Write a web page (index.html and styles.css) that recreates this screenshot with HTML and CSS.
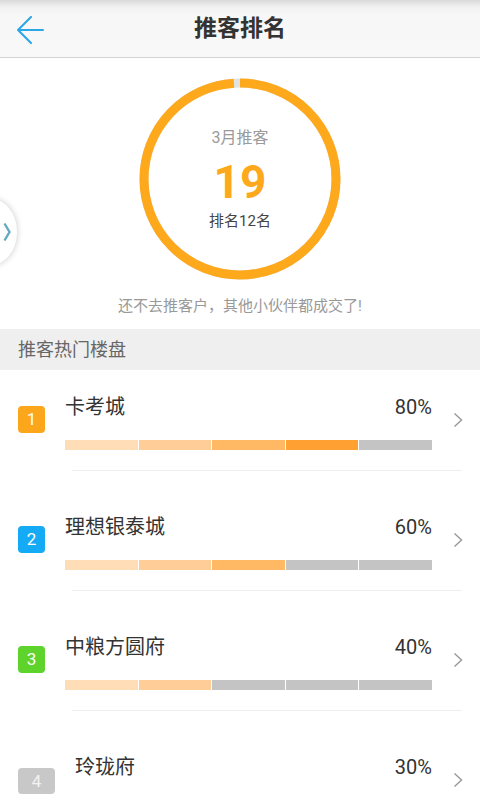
FILE: index.html
```html
<!DOCTYPE html>
<html lang="zh-CN">
<head>
<meta charset="utf-8">
<title>推客排名</title>
<link rel="stylesheet" href="styles.css">
</head>
<body>
<header class="topbar">
  <span class="back">
    <svg width="28" height="28" viewBox="0 0 28 28"><path d="M14 1 L1 14 L14 27 M1 14 H26" fill="none" stroke="#2ba6e6" stroke-width="2" stroke-linecap="round" stroke-linejoin="round"/></svg>
  </span>
  <h1 class="title">推客排名</h1>
  <span></span>
</header>

<section class="hero">
  <div class="side-tab">
    <svg width="8" height="20" viewBox="0 0 8 20"><path d="M1.5 1.5 L6.5 10 L1.5 18.5" fill="none" stroke="#64a9c6" stroke-width="2.4"/></svg>
  </div>
  <div class="ring">
    <svg class="ring-svg" width="202" height="202" viewBox="0 0 202 202">
      <circle cx="101" cy="101" r="96" fill="none" stroke="#e2e2e2" stroke-width="9"/>
      <circle cx="101" cy="101" r="96" fill="none" stroke="#fea81b" stroke-width="9" stroke-dasharray="596 700" transform="rotate(-90 101 101)"/>
    </svg>
    <div class="ring-text">
      <div class="month">3月推客</div>
      <div class="count">19</div>
      <div class="rank">排名12名</div>
    </div>
  </div>
  <p class="hint">还不去推客户，其他小伙伴都成交了!</p>
</section>

<div class="section-title">推客热门楼盘</div>

<ul class="list">
  <li class="item">
    <div class="row">
      <span class="badge b1">1</span>
      <div class="main">
        <div class="line"><span class="name">卡考城</span><span class="rate">80%</span></div>
        <div class="bar"><i class="s1"></i><i class="s2"></i><i class="s3"></i><i class="s4"></i><i class="s0"></i></div>
      </div>
      <svg class="chev" width="10" height="16" viewBox="0 0 10 16"><path d="M1.5 1.5 L8.5 8 L1.5 14.5" fill="none" stroke="#9c9c9c" stroke-width="1.5"/></svg>
    </div>
  </li>
  <li class="item">
    <div class="row">
      <span class="badge b2">2</span>
      <div class="main">
        <div class="line"><span class="name">理想银泰城</span><span class="rate">60%</span></div>
        <div class="bar"><i class="s1"></i><i class="s2"></i><i class="s3"></i><i class="s0"></i><i class="s0"></i></div>
      </div>
      <svg class="chev" width="10" height="16" viewBox="0 0 10 16"><path d="M1.5 1.5 L8.5 8 L1.5 14.5" fill="none" stroke="#9c9c9c" stroke-width="1.5"/></svg>
    </div>
  </li>
  <li class="item">
    <div class="row">
      <span class="badge b3">3</span>
      <div class="main">
        <div class="line"><span class="name">中粮方圆府</span><span class="rate">40%</span></div>
        <div class="bar"><i class="s1"></i><i class="s2"></i><i class="s0"></i><i class="s0"></i><i class="s0"></i></div>
      </div>
      <svg class="chev" width="10" height="16" viewBox="0 0 10 16"><path d="M1.5 1.5 L8.5 8 L1.5 14.5" fill="none" stroke="#9c9c9c" stroke-width="1.5"/></svg>
    </div>
  </li>
  <li class="item">
    <div class="row">
      <span class="badge b4">4</span>
      <div class="main">
        <div class="line"><span class="name">玲珑府</span><span class="rate">30%</span></div>
        <div class="bar"><i class="s1"></i><i class="s0"></i><i class="s0"></i><i class="s0"></i><i class="s0"></i></div>
      </div>
      <svg class="chev" width="10" height="16" viewBox="0 0 10 16"><path d="M1.5 1.5 L8.5 8 L1.5 14.5" fill="none" stroke="#9c9c9c" stroke-width="1.5"/></svg>
    </div>
  </li>
</ul>
</body>
</html>
```

FILE: styles.css
```css
* { box-sizing: border-box; }
html, body {
  margin: 0;
  padding: 0;
  background: #ffffff;
  font-family: Roboto, "Noto Sans CJK SC", sans-serif;
  color: #333;
}
body { width: 480px; overflow: hidden; }

.topbar {
  height: 58px;
  display: grid;
  grid-template-columns: 60px 1fr 60px;
  align-items: center;
  background: linear-gradient(#d9d9d9 0, #f1f1f1 7px, #f7f7f7 14px, #f8f8f8 100%);
  border-bottom: 1px solid #d2d2d2;
}
.back { display: flex; padding: 2px 0 0 17px; }
.title {
  margin: 0;
  text-align: center;
  font-size: 23px;
  font-weight: 700;
  color: #333;
  line-height: 58px;
}

.hero {
  position: relative;
  display: flex;
  flex-direction: column;
  align-items: center;
  padding: 20px 0 13px;
}
.side-tab {
  position: absolute;
  left: -34px;
  top: 141px;
  width: 51px;
  height: 66px;
  border-radius: 50%;
  background: #fff;
  box-shadow: 0 0 6px rgba(0,0,0,0.22);
  display: flex;
  align-items: center;
  justify-content: flex-end;
  padding-right: 6px;
}
.ring {
  display: grid;
  width: 202px;
  height: 202px;
}
.ring-svg, .ring-text { grid-area: 1 / 1; }
.ring-text {
  display: flex;
  flex-direction: column;
  align-items: center;
  justify-content: center;
}
.month { font-size: 16px; line-height: 22px; color: #9a9a9a; }
.count {
  font-size: 46px;
  line-height: 48px;
  font-weight: 700;
  color: #fea81b;
  margin-top: 9px;
}
.rank { font-size: 15px; line-height: 20px; color: #444; margin-top: 5px; }
.hint {
  margin: 16px 0 0;
  font-size: 15px;
  line-height: 20px;
  color: #999;
}

.section-title {
  height: 41px;
  line-height: 41px;
  background: #efefef;
  padding-left: 18px;
  font-size: 18px;
  color: #666;
}

.list { list-style: none; margin: 0; padding: 0; }
.item { padding-top: 44px; }
.item:first-child { padding-top: 25px; }
.item::after {
  content: "";
  display: block;
  height: 1px;
  margin: 20px 18px 0 72px;
  background: #eeeeee;
}
.row {
  display: flex;
  align-items: center;
  gap: 20px;
  padding: 0 17px 0 18px;
}
.badge {
  flex: none;
  width: 27px;
  height: 27px;
  border-radius: 4px;
  color: #fff;
  font-size: 17px;
  line-height: 27px;
  text-align: center;
  margin-bottom: 6px;
}
.b1 { background: #fca71b; }
.b2 { background: #15aaf5; }
.b3 { background: #5ed32b; }
.b4 { background: #c8c8c8; width: 37px; height: 26px; line-height: 26px; color: #f2f2f2; margin-bottom: 4px; }
.main { flex: 1; min-width: 0; }
.line {
  display: flex;
  justify-content: space-between;
  align-items: center;
  height: 24px;
}
.name, .rate { font-size: 20px; line-height: 24px; color: #333; }
.bar {
  display: flex;
  gap: 1px;
  height: 10px;
  margin-top: 21px;
}
.bar i { flex: 1; }
.s1 { background: #ffddb7; }
.s2 { background: #ffcd97; }
.s3 { background: #ffb863; }
.s4 { background: #ffa033; }
.s0 { background: #c4c4c4; }
.chev { flex: none; margin-left: 1px; margin-bottom: 6px; }
```
